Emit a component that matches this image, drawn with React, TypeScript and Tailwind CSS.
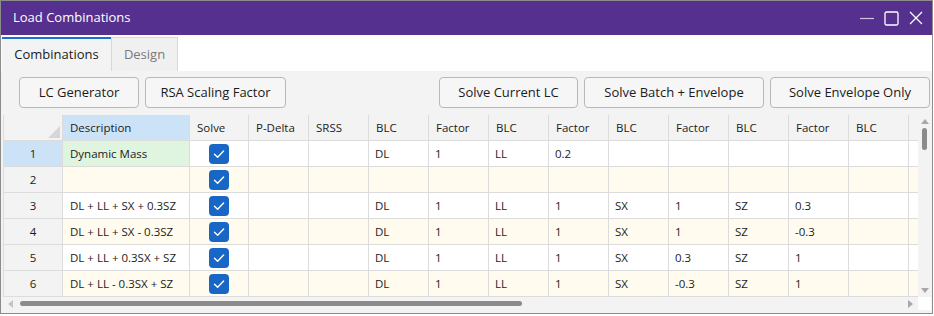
import React from "react";

const cols = [127, 59, 60, 60, 60, 60, 60, 60, 60, 60, 60, 60, 60, 60];
const headers = ["Description", "Solve", "P-Delta", "SRSS", "BLC", "Factor", "BLC", "Factor", "BLC", "Factor", "BLC", "Factor", "BLC", ""];

const rows = [
  ["Dynamic Mass", "", "", "DL", "1", "LL", "0.2", "", "", "", "", "", ""],
  ["", "", "", "", "", "", "", "", "", "", "", "", ""],
  ["DL + LL + SX + 0.3SZ", "", "", "DL", "1", "LL", "1", "SX", "1", "SZ", "0.3", "", ""],
  ["DL + LL + SX - 0.3SZ", "", "", "DL", "1", "LL", "1", "SX", "1", "SZ", "-0.3", "", ""],
  ["DL + LL + 0.3SX + SZ", "", "", "DL", "1", "LL", "1", "SX", "0.3", "SZ", "1", "", ""],
  ["DL + LL - 0.3SX + SZ", "", "", "DL", "1", "LL", "1", "SX", "-0.3", "SZ", "1", "", ""],
];

const Check = () => (
  <div className="w-[20px] h-[20px] rounded-[4px] bg-[#1866c6] flex items-center justify-center">
    <svg width="20" height="20" viewBox="0 0 20 20">
      <path d="M5.5 10.2 L8.6 13.2 L14.6 6.9" fill="none" stroke="white" strokeWidth="1.4" strokeLinecap="round" strokeLinejoin="round" />
    </svg>
  </div>
);

const Btn = ({ label, w }: { label: string; w: string }) => (
  <button className={`${w} h-[31px] rounded-[4px] border border-[#b8b8b8] bg-[#f6f6f6] text-[13px] text-[#1b1b1b] flex items-center justify-center`}>
    {label}
  </button>
);

const App = () => {
  return (
    <div className="w-[934px] h-[316px] bg-white font-['Open_Sans',sans-serif]">
      <div className="w-[933px] h-[314px] border border-[#8c8c8c] flex flex-col bg-[#f3f3f3]">
        {/* title */}
        <div className="h-[34px] bg-[#56308e] flex items-center justify-between pl-[12px] pr-[9px]">
          <span className="text-white text-[13px]">Load Combinations</span>
          <div className="flex items-center gap-[10px] text-white">
            <svg width="14" height="14" viewBox="0 0 14 14">
              <path d="M0 7.5 H14" stroke="#cfc3e0" strokeWidth="1.2" />
            </svg>
            <svg width="15" height="15" viewBox="0 0 15 15">
              <rect x="1" y="1" width="13" height="13" rx="1.5" fill="none" stroke="white" strokeWidth="1.3" />
            </svg>
            <svg width="14" height="14" viewBox="0 0 14 14">
              <path d="M1 1 L13 13 M13 1 L1 13" stroke="white" strokeWidth="1.3" />
            </svg>
          </div>
        </div>

        {/* tabs */}
        <div className="h-[36px] bg-white flex items-end pl-px">
          <div className="h-[34px] w-[109px] border-t-2 border-[#1a6fd1] bg-[#f3f3f3] flex items-center justify-center text-[13px] text-[#1b1b1b]">
            Combinations
          </div>
          <div className="h-[34px] w-[67px] border border-b-0 border-[#d8d8d8] bg-[#f0f0f0] flex items-center justify-center text-[13px] text-[#7a7a7a]">
            Design
          </div>
        </div>

        {/* toolbar */}
        <div className="h-[44px] flex items-start pt-[6px] pl-[18px] pr-[2px]">
          <div className="flex gap-[6px]">
            <Btn label="LC Generator" w="w-[120px]" />
            <Btn label="RSA Scaling Factor" w="w-[141px]" />
          </div>
          <div className="ml-auto flex gap-[6px]">
            <Btn label="Solve Current LC" w="w-[139px]" />
            <Btn label="Solve Batch + Envelope" w="w-[180px]" />
            <Btn label="Solve Envelope Only" w="w-[160px]" />
          </div>
        </div>

        {/* grid */}
        <div className="ml-[2px] w-[928px] h-[195px] flex flex-col bg-white">
          <div className="flex h-[182px]">
            <div className="w-[915px] overflow-hidden border-l border-[#dcdcdc] text-[11.5px] text-[#1b1b1b]">
              <div className="flex h-[26px] w-max">
                <div className="w-[59px] h-[26px] shrink-0 bg-[#f3f3f3] border-r border-b border-[#dcdcdc] relative">
                  <div className="absolute right-[2px] bottom-[2px] w-0 h-0 border-l-[12px] border-l-transparent border-b-[12px] border-b-[#d6d6d6]" />
                </div>
                {headers.map((h, i) => (
                  <div
                    key={i}
                    style={{ width: cols[i] }}
                    className={`h-[26px] shrink-0 border-r border-b border-[#dcdcdc] flex items-center pl-[7px] ${i === 0 ? "bg-[#cce3f7]" : "bg-[#f3f3f3]"}`}
                  >
                    {h}
                  </div>
                ))}
              </div>
              {rows.map((r, ri) => {
                const cream = ri % 2 === 1;
                const rowBg = cream ? "bg-[#fffcef]" : "bg-white";
                return (
                  <div key={ri} className="flex h-[26px] w-max">
                    <div className={`w-[59px] h-[26px] shrink-0 border-r border-b border-[#dcdcdc] flex items-center justify-center ${ri === 0 ? "bg-[#cce3f7]" : "bg-[#f3f3f3]"}`}>
                      {ri + 1}
                    </div>
                    <div className={`w-[127px] h-[26px] shrink-0 border-r border-b border-[#dcdcdc] flex items-center pl-[7px] ${ri === 0 ? "bg-[#e0f5df]" : rowBg}`}>
                      {r[0]}
                    </div>
                    <div className={`w-[59px] h-[26px] shrink-0 border-r border-b border-[#dcdcdc] flex items-center justify-center ${rowBg}`}>
                      <Check />
                    </div>
                    {r.slice(1).map((c, ci) => (
                      <div key={ci} className={`w-[60px] h-[26px] shrink-0 border-r border-b border-[#dcdcdc] flex items-center pl-[6px] ${rowBg}`}>
                        {c}
                      </div>
                    ))}
                  </div>
                );
              })}
            </div>
            {/* vertical scrollbar */}
            <div className="w-[13px] h-[182px] bg-[#f3f3f3] flex flex-col items-center pt-[4px] pb-[4px]">
              <svg width="8" height="5" viewBox="0 0 8 5">
                <path d="M0 5 L4 0 L8 5 Z" fill="#a8a8a8" />
              </svg>
              <div className="mt-[4px] w-[5px] h-[22px] rounded-full bg-[#8b8b8b]" />
              <svg className="mt-auto" width="8" height="5" viewBox="0 0 8 5">
                <path d="M0 0 L4 5 L8 0 Z" fill="#a8a8a8" />
              </svg>
            </div>
          </div>
          {/* horizontal scrollbar */}
          <div className="flex h-[13px]">
            <div className="w-[915px] bg-[#f3f3f3] flex items-center pl-[5px] pr-[5px]">
              <svg width="5" height="8" viewBox="0 0 5 8">
                <path d="M5 0 L0 4 L5 8 Z" fill="#c4c4c4" />
              </svg>
              <div className="ml-[7px] w-[502px] h-[5px] rounded-full bg-[#8b8b8b]" />
              <svg className="ml-auto" width="5" height="8" viewBox="0 0 5 8">
                <path d="M0 0 L5 4 L0 8 Z" fill="#a8a8a8" />
              </svg>
            </div>
            <div className="w-[13px] bg-white" />
          </div>
        </div>
      </div>
    </div>
  );
};

export default App;
